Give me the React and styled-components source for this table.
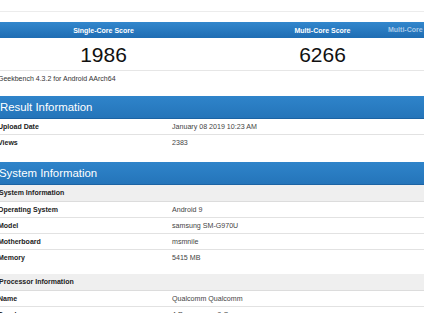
import React from 'react'
import styled, { createGlobalStyle } from 'styled-components'

const GlobalStyle = createGlobalStyle`
  html, body {
    margin: 0;
    padding: 0;
    background: #fff;
  }
  body {
    font-family: "Liberation Sans", Arial, sans-serif;
    color: #333;
  }
`

const Page = styled.div`
  width: 424px;
  height: 313px;
  overflow: hidden;
  background: #fff;
`

const Shift = styled.div`
  margin-left: -4px;
  width: 440px;
`

const TopStrip = styled.div`
  height: 11px;
  border-bottom: 1px solid #ececec;
  margin-bottom: 10px;
`

const ScoreBox = styled.div`
  position: relative;
  margin-left: -2px;
  border-bottom: 1px solid #e6e6e6;
`

const ScoreHead = styled.div`
  display: grid;
  grid-template-columns: 219px 219px;
  height: 16px;
  align-items: center;
  background: linear-gradient(#3287cd, #1f6db3);
`

const ScoreLabel = styled.div`
  text-align: center;
  color: #fff;
  font-weight: bold;
  font-size: 7px;
  white-space: nowrap;
`

const GhostLabel = styled.div`
  position: absolute;
  left: 394px;
  top: 0;
  height: 16px;
  line-height: 16px;
  color: #a8c9e8;
  font-weight: bold;
  font-size: 7px;
  white-space: nowrap;
`

const ScoreRow = styled.div`
  display: grid;
  grid-template-columns: 219px 219px;
  height: 32px;
  align-items: center;
`

const ScoreValue = styled.div`
  text-align: center;
  font-size: 21px;
  color: #111;
  padding-top: 2px;
`

const Version = styled.div`
  font-size: 7px;
  color: #333;
  padding-left: 2px;
  margin-top: 4px;
  height: 21px;
  white-space: nowrap;
`

const Section = styled.section`
  margin-bottom: ${(p) => p.$gap || 0}px;
`

const Title = styled.div`
  height: 23px;
  line-height: 23px;
  padding-left: ${(p) => p.$indent}px;
  color: #fff;
  font-size: 11.4px;
  background: linear-gradient(#2f84ca, #2474b9);
  box-shadow: inset 0 -1px 0 #1c63a3;
`

const SubHead = styled.div`
  height: 16px;
  line-height: 16px;
  padding-left: 3px;
  margin-top: ${(p) => p.$top || 0}px;
  background: #efefef;
  border-bottom: 1px solid #dcdcdc;
  font-weight: bold;
  font-size: 7px;
  color: #222;
`

const Row = styled.div`
  display: grid;
  grid-template-columns: 176px 1fr;
  height: 15px;
  align-items: center;
  border-bottom: 1px solid ${(p) => (p.$last ? 'transparent' : '#e2e2e2')};
  font-size: 7px;
`

const Label = styled.div`
  padding-left: 2px;
  font-weight: bold;
  color: #222;
  white-space: nowrap;
`

const Value = styled.div`
  color: #444;
  font-size: 7.1px;
  white-space: nowrap;
`

const InfoRow = ({ label, value, last }) => (
  <Row $last={last}>
    <Label>{label}</Label>
    <Value>{value}</Value>
  </Row>
)

export default function App() {
  return (
    <Page>
      <GlobalStyle />
      <Shift>
        <TopStrip />
        <ScoreBox>
          <ScoreHead>
            <ScoreLabel>Single-Core Score</ScoreLabel>
            <ScoreLabel>Multi-Core Score</ScoreLabel>
          </ScoreHead>
          <GhostLabel>Multi-Core Score</GhostLabel>
          <ScoreRow>
            <ScoreValue>1986</ScoreValue>
            <ScoreValue>6266</ScoreValue>
          </ScoreRow>
        </ScoreBox>
        <Version>Geekbench 4.3.2 for Android AArch64</Version>

        <Section $gap={11}>
          <Title $indent={4}>Result Information</Title>
          <InfoRow label="Upload Date" value="January 08 2019 10:23 AM" />
          <InfoRow label="Views" value="2383" last />
        </Section>

        <Section>
          <Title $indent={3}>System Information</Title>
          <SubHead>System Information</SubHead>
          <InfoRow label="Operating System" value="Android 9" />
          <InfoRow label="Model" value="samsung SM-G970U" />
          <InfoRow label="Motherboard" value="msmnile" />
          <InfoRow label="Memory" value="5415 MB" last />
          <SubHead $top={8}>Processor Information</SubHead>
          <InfoRow label="Name" value="Qualcomm Qualcomm" />
          <InfoRow label="Topology" value="4 Processors, 8 Cores" />
        </Section>
      </Shift>
    </Page>
  )
}
